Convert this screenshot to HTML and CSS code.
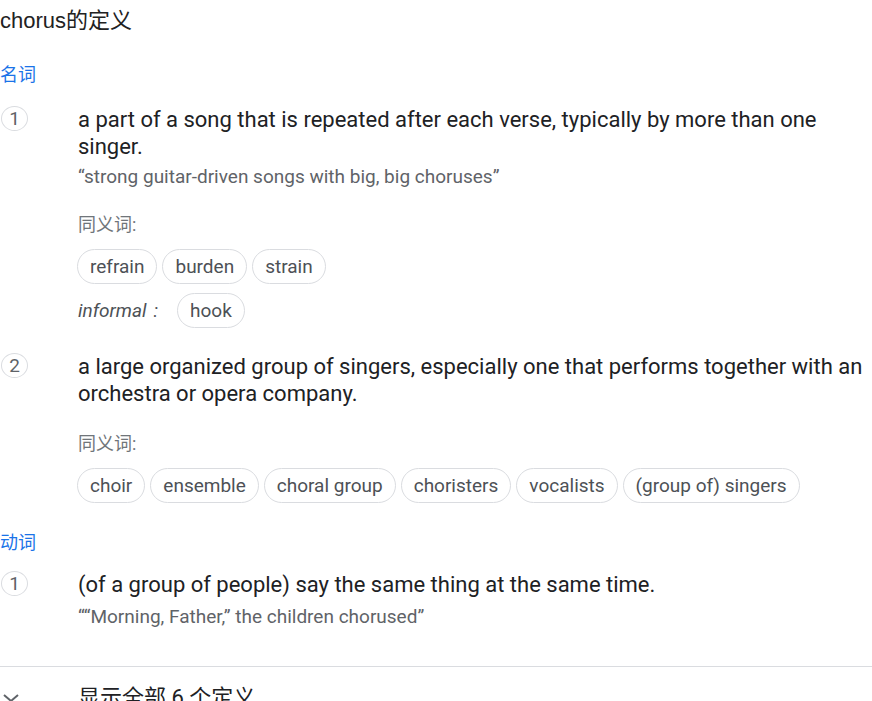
FILE: index.html
```html
<!DOCTYPE html>
<html lang="zh">
<head>
<meta charset="utf-8">
<link rel="stylesheet" href="styles.css">
</head>
<body>
<div class="page">
  <div class="title">chorus的定义</div>

  <div class="pos">名词</div>

  <div class="sense">
    <div class="num">1</div>
    <div class="body">
      <div class="def">a part of a song that is repeated after each verse, typically by more than one singer.</div>
      <div class="example">“strong guitar-driven songs with big, big choruses”</div>
      <div class="syn-label">同义词:</div>
      <div class="chips">
        <span class="chip">refrain</span>
        <span class="chip">burden</span>
        <span class="chip">strain</span>
      </div>
      <div class="chips chips-next">
        <span class="register">informal<span class="colon">:</span></span>
        <span class="chip">hook</span>
      </div>
    </div>
  </div>

  <div class="sense sense-next">
    <div class="num">2</div>
    <div class="body">
      <div class="def">a large organized group of singers, especially one that performs together with an orchestra or opera company.</div>
      <div class="syn-label">同义词:</div>
      <div class="chips">
        <span class="chip">choir</span>
        <span class="chip">ensemble</span>
        <span class="chip">choral group</span>
        <span class="chip">choristers</span>
        <span class="chip">vocalists</span>
        <span class="chip">(group of) singers</span>
      </div>
    </div>
  </div>

  <div class="pos pos-verb">动词</div>

  <div class="sense sense-verb">
    <div class="num">1</div>
    <div class="body">
      <div class="def">(of a group of people) say the same thing at the same time.</div>
      <div class="example example-verb">““Morning, Father,” the children chorused”</div>
    </div>
  </div>

  <div class="divider"></div>

  <div class="more">
    <svg class="chev" width="24" height="24" viewBox="0 0 24 24"><path d="M5 9l7 6 7-6" fill="none" stroke="#5f6368" stroke-width="2"/></svg>
    <span class="more-text">显示全部 6 个定义</span>
  </div>
</div>
</body>
</html>
```
FILE: styles.css
```css
html, body {
  margin: 0;
  padding: 0;
  background: #fff;
}
body {
  font-family: Roboto, "Noto Sans CJK SC", sans-serif;
  color: #202124;
  overflow: hidden;
}
.page {
  width: 872px;
}
.title {
  font-family: "Liberation Sans", "Noto Sans CJK SC", sans-serif;
  font-size: 22px;
  line-height: 26px;
  padding-top: 8px;
  color: #222;
}
.pos {
  margin-top: 29px;
  font-size: 18px;
  line-height: 24px;
  color: #1a73e8;
}
.pos-verb {
  margin-top: 28px;
}
.sense {
  display: grid;
  grid-template-columns: 78px 1fr;
  margin-top: 19px;
}
.sense-next {
  margin-top: 25.5px;
}
.sense-verb {
  margin-top: 16.5px;
}
.num {
  box-sizing: border-box;
  width: 27px;
  height: 25px;
  margin: 0 0 0 1px;
  border: 1px solid #dadce0;
  border-radius: 50%;
  display: flex;
  align-items: center;
  justify-content: center;
  font-size: 19px;
  color: #5f6368;
}
.def {
  font-size: 22px;
  line-height: 27px;
  color: #202124;
}
.example {
  margin-top: 5px;
  font-size: 19px;
  line-height: 24px;
  color: #5f6368;
}
.example-verb {
  margin-top: 6.5px;
}
.syn-label {
  margin-top: 23.5px;
  font-size: 18px;
  line-height: 24px;
  color: #70757a;
}
.sense-next .syn-label {
  margin-top: 24.5px;
}
.chips {
  display: flex;
  flex-wrap: wrap;
  align-items: center;
  gap: 5px;
  margin-top: 12px;
  margin-left: -1px;
}
.chips-next {
  margin-top: 9px;
  margin-left: 0;
  gap: 19px;
}
.chip {
  box-sizing: border-box;
  height: 35px;
  padding: 0 12px;
  border: 1px solid #dadce0;
  border-radius: 18px;
  display: inline-flex;
  align-items: center;
  font-size: 19px;
  color: #4d5156;
}
.register {
  font-size: 19px;
  font-style: italic;
  color: #4d5156;
}
.colon {
  margin-left: 7px;
}
.divider {
  margin-top: 37.5px;
  height: 1px;
  background: #dadce0;
}
.more {
  display: grid;
  grid-template-columns: 78px 1fr;
  align-items: center;
  margin-top: 17px;
}
.chev {
  display: block;
  margin-left: -1px;
}
.more-text {
  font-size: 22px;
  line-height: 28px;
  color: #202124;
}
```
